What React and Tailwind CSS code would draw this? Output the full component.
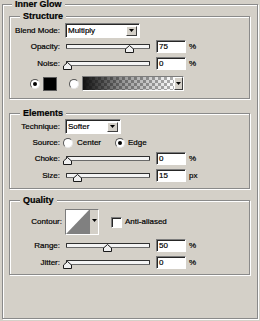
const sunken =
  'border border-t-[#7c7c7c] border-l-[#7c7c7c] border-b-white border-r-white shadow-[inset_1px_1px_0_#262626]';

function Group({ title, legendClass, className, children }) {
  return (
    <fieldset
      className={`border border-[#8a8a8a] shadow-[1px_1px_0_#fff,inset_1px_1px_0_#fff] ${className}`}
    >
      <legend className={`px-[3px] bg-[#d4d0c8] font-bold text-[9px] ${legendClass}`}>{title}</legend>
      {children}
    </fieldset>
  );
}

function Label({ children, className = 'w-[50px]' }) {
  return <div className={`${className} shrink-0 text-right text-[8px] leading-[10px]`}>{children}</div>;
}

function Arrow({ className = '' }) {
  return (
    <div
      className={`flex items-center justify-center bg-[#d4d0c8] border border-t-white border-l-white border-b-[#404040] border-r-[#404040] ${className}`}
    >
      <svg width="5" height="3" viewBox="0 0 5 3">
        <polygon points="0,0 5,0 2.5,3" fill="#000" />
      </svg>
    </div>
  );
}

function Select({ value, className }) {
  return (
    <div className={`flex items-center h-[15px] bg-white pl-[2px] pr-[2px] ${sunken} ${className}`}>
      <span className="flex-1 text-[8px] leading-[10px]">{value}</span>
      <Arrow className="w-[11px] h-[10px]" />
    </div>
  );
}

function Slider({ pos }) {
  return (
    <div className="relative ml-[6px] w-[84px] h-[13px] flex items-center">
      <div className="w-full h-[5px] rounded-[1px] border border-[#303030] border-b-[#6a6a6a] bg-[#f4f4f4]" />
      <svg
        className="absolute top-[5px]"
        style={{ left: pos - 4 }}
        width="9"
        height="8"
        viewBox="0 0 9 8"
      >
        <polygon points="4.5,0.5 8.5,4 8.5,7.5 0.5,7.5 0.5,4" fill="#f0f0f0" stroke="#1a1a1a" strokeWidth="1" />
      </svg>
    </div>
  );
}

function SliderRow({ label, value, unit, pos, className }) {
  return (
    <div className={`flex items-center h-[13px] ${className}`}>
      <Label>{label}</Label>
      <Slider pos={pos} />
      <div className={`ml-[6px] w-[30px] h-[13px] bg-white pl-[2px] text-[8px] leading-[11px] ${sunken}`}>{value}</div>
      <span className="ml-[3px] text-[8px] leading-[10px]">{unit}</span>
    </div>
  );
}

function Radio({ checked, className = '' }) {
  return (
    <div
      className={`w-[10px] h-[10px] rounded-full bg-white border border-t-[#555] border-l-[#555] border-b-[#e8e8e8] border-r-[#e8e8e8] flex items-center justify-center ${className}`}
    >
      {checked && <div className="w-[4px] h-[4px] rounded-full bg-black" />}
    </div>
  );
}

export default function App() {
  return (
    <div className="w-[260px] h-[321px] bg-[#d4d0c8] text-black font-['Liberation_Sans',Arial,sans-serif] [-webkit-text-stroke:0.2px_#000] overflow-hidden">
      <Group title="Inner Glow" legendClass="ml-[9px] leading-[9px]" className="ml-[2px] w-[256px] h-[319px]">
        <Group title="Structure" legendClass="ml-[10px] leading-[10px]" className="ml-[6px] mt-[2px] w-[241px] pb-[7px]">
          <div className="flex items-center h-[15px] mt-[2px]">
            <Label>Blend Mode:</Label>
            <Select value="Multiply" className="ml-[5px] w-[75px]" />
          </div>
          <SliderRow label="Opacity:" value="75" unit="%" pos={63} className="mt-[2px]" />
          <SliderRow label="Noise:" value="0" unit="%" pos={1} className="mt-[4px]" />
          <div className="flex items-center h-[15px] mt-[6px]">
            <Radio checked className="ml-[20px]" />
            <div className="ml-[3px] w-[14px] h-[14px] bg-black border border-[#5a5a5a]" />
            <Radio className="ml-[12px]" />
            <div className={`ml-[3px] w-[102px] h-[15px] flex ${sunken}`}>
              <div className="flex-1 [background-image:linear-gradient(to_right,#111,rgba(0,0,0,0.4)_45%,rgba(0,0,0,0)),repeating-conic-gradient(#b0b0b0_0_25%,#fff_0_50%)] [background-size:100%_100%,6px_6px]" />
              <Arrow className="w-[9px] h-[13px]" />
            </div>
          </div>
        </Group>

        <Group title="Elements" legendClass="ml-[10px] leading-[10px]" className="ml-[6px] mt-[9px] w-[241px] pb-[6px]">
          <div className="flex items-center h-[15px] mt-[1px]">
            <Label>Technique:</Label>
            <Select value="Softer" className="ml-[5px] w-[56px]" />
          </div>
          <div className="flex items-center h-[11px] mt-[3px] text-[8px] leading-[10px]">
            <Label>Source:</Label>
            <Radio className="ml-[3px]" />
            <span className="ml-[4px]">Center</span>
            <Radio checked className="ml-[14px]" />
            <span className="ml-[3px]">Edge</span>
          </div>
          <SliderRow label="Choke:" value="0" unit="%" pos={1} className="mt-[4px]" />
          <SliderRow label="Size:" value="15" unit="px" pos={11} className="mt-[4px]" />
        </Group>

        <Group title="Quality" legendClass="ml-[10px] leading-[10px]" className="ml-[6px] mt-[6px] w-[241px] pb-[5px]">
          <div className="flex items-center h-[26px] mt-[4px]">
            <Label className="w-[52px]">Contour:</Label>
            <div className={`ml-[3px] w-[34px] h-[26px] flex ${sunken}`}>
              <svg className="flex-1 h-full" viewBox="0 0 24 24" preserveAspectRatio="none">
                <rect width="24" height="24" fill="#fff" />
                <polygon points="0,24 24,0 24,24" fill="#808080" />
              </svg>
              <div className="w-[9px] h-full bg-[#d4d0c8] border-l border-[#808080] flex justify-center pt-[9px]">
                <svg width="5" height="3" viewBox="0 0 5 3">
                  <polygon points="0,0 5,0 2.5,3" fill="#000" />
                </svg>
              </div>
            </div>
            <div className={`ml-[12px] w-[11px] h-[11px] bg-white ${sunken}`} />
            <span className="ml-[3px] text-[8px] leading-[10px]">Anti-aliased</span>
          </div>
          <SliderRow label="Range:" value="50" unit="%" pos={41} className="mt-[4px]" />
          <SliderRow label="Jitter:" value="0" unit="%" pos={1} className="mt-[4px]" />
        </Group>
      </Group>
    </div>
  );
}
